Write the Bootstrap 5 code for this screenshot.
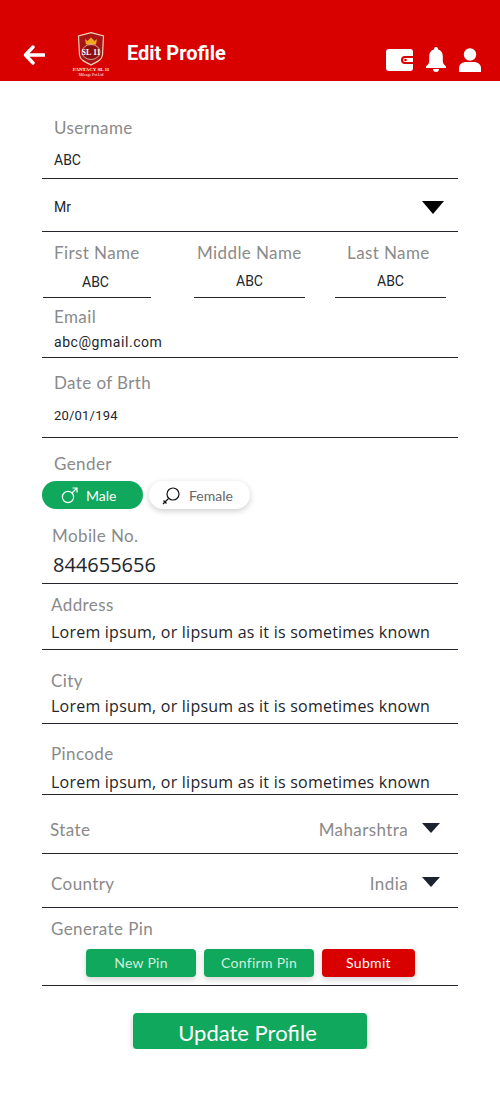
<!DOCTYPE html>
<html lang="en">

<head>
    <meta charset="UTF-8">
    <meta name="viewport" content="width=device-width, initial-scale=1.0">
    <title>Edit Profile</title>
    <link href="https://cdn.jsdelivr.net/npm/bootstrap@5.3.2/dist/css/bootstrap.min.css" rel="stylesheet">
    <style>
        body { font-family: "Lato", "Liberation Sans", sans-serif; background: #fff; color: #22252b; }
        .top-bar { height: 81px; background: #d90000; padding: 32px 19px 0 23px; }
        .top-title { font-family: "Roboto", sans-serif; font-weight: 700; font-size: 20px; line-height: 28px; color: #fff; margin-left: 17px; margin-top: 7px; }
        .arrow-ico { margin-top: 13px; }
        .logo-box { width: 38px; height: 45px; margin-left: 27px; }
        .top-icons { gap: 13px; margin-left: auto; margin-top: 15px; }
        .form-area { padding: 0 42px; }
        .fld { border-bottom: 1px solid #22252b; padding: 0 12px; }
        .lbl { font-size: 17px; line-height: 22px; color: #8a8a8a; letter-spacing: .4px; }
        .val { font-family: "Roboto", sans-serif; font-size: 14px; line-height: 20px; color: #22252b; }
        .val-big { font-family: "Open Sans", sans-serif; font-size: 16px; line-height: 24px; letter-spacing: .23px; color: #22252b; white-space: nowrap; }
        .f-user { height: 98px; padding-top: 36px; }
        .f-user .val { margin-top: 11px; }
        .f-title { height: 53px; padding: 18px 14px 0 12px; }
        .f-title svg { margin-top: 4px; }
        .names { height: 66px; }
        .name-col { border-bottom: 1px solid #22252b; }
        .nm-1 { width: 108px; margin-left: 1px; padding-top: 10px; }
        .nm-2 { width: 111px; margin-left: 43px; padding-top: 10px; }
        .nm-3 { width: 111px; margin-left: 30px; padding-top: 10px; }
        .name-col .lbl { white-space: nowrap; }
        .nm-1 .lbl { padding-left: 11px; }
        .nm-2 .lbl { padding-left: 3px; }
        .nm-3 .lbl { padding-left: 12px; }
        .name-col .val { margin-top: 7px; height: 22px; }
        .nm-1 .val { padding-right: 3px; margin-top: 8px; }
        .f-email { height: 60px; padding-top: 8px; }
        .f-email .val { margin-top: 4px; letter-spacing: .55px; }
        .f-dob { height: 80px; padding-top: 14px; }
        .f-dob .val { margin-top: 12px; font-size: 13px; letter-spacing: .2px; }
        .gender-lbl { padding: 15px 12px 0; }
        .pills { gap: 6px; margin-top: 6px; }
        .pill { height: 28px; border-radius: 14px; font-size: 14px; display: flex; align-items: center; }
        .pill-on { width: 101px; background: #10a85c; color: #fff; padding-left: 19px; }
        .pill-off { width: 101px; background: #fff; color: #666; padding-left: 13px; box-shadow: 0 2px 6px rgba(0,0,0,.2); }
        .pill svg { margin-right: 8px; }
        .f-mobile { height: 75px; padding: 16px 11px 0 10px; }
        .f-mobile .val-big { font-size: 20px; line-height: 28px; margin-top: 4px; margin-left: 1px; letter-spacing: 0; }
        .f-addr { height: 66px; padding: 10px 9px 0; }
        .f-addr .val-big { margin-top: 4px; }
        .f-city { height: 74px; padding: 20px 9px 0; }
        .f-city .val-big { margin-top: 2px; }
        .f-pin { height: 71px; padding: 19px 9px 0; }
        .f-pin .val-big { margin-top: 5px; }
        .f-sel { padding: 0 18px 0 8px; }
        .f-state { height: 59px; padding-top: 24px; }
        .f-country { height: 54px; padding-top: 19px; padding-left: 9px; }
        .sel-val { margin-left: auto; margin-right: 14px; }
        .f-gen { height: 78px; padding: 10px 0 0 9px; }
        .pin-btns { gap: 8px; margin-top: 9px; margin-left: 35px; }
        .pin-btn { height: 28px; width: 110px; border-radius: 4px; border: 0; padding: 0; font-size: 14px; line-height: 28px; letter-spacing: .3px; color: #cfeedd; background: #10a85c; box-shadow: 0 3px 6px rgba(0,0,0,.16); }
        .pin-btn:hover { color: #cfeedd; background: #10a85c; }
        .pin-red, .pin-red:hover { width: 93px; background: #d90000; color: #fff; }
        .update-btn { display: block; width: 234px; height: 36px; margin: 27px 0 0 91px; border: 0; border-radius: 4px; padding: 3px 5px 0 0; background: #10a85c; color: #fff; font-size: 22px; line-height: 33px; box-shadow: 0 3px 6px rgba(0,0,0,.2); }
    </style>
</head>

<body>
    <!-- header -->
    <div class="top-bar d-flex align-items-start">
        <svg class="arrow-ico" width="22" height="20" viewBox="0 0 22 20">
            <path d="M10 2 2.5 10 10 18M3 10H21" fill="none" stroke="#fff" stroke-width="3.4" stroke-linecap="round" stroke-linejoin="round"/>
        </svg>
        <svg class="logo-box" viewBox="0 0 38 45">
            <path d="M19 .6 31.5 4 30.5 23C29.5 29 24 30 19 33 14 30 8.500 29 7.500 23L6.500 4Z" fill="#a81414" stroke="#ecd3b8" stroke-width="1.2"/>
            <path d="M13 7l2.500 2L19 5.500 22.500 9 25 7l-1 5.500H14Z" fill="#f0a81e"/>
            <ellipse cx="19" cy="20" rx="9" ry="7.500" fill="#8a1010" stroke="#fff" stroke-width=".6"/>
            <text x="19" y="23" font-size="8" font-weight="700" text-anchor="middle" fill="#fff" font-family="Liberation Serif">SL 11</text>
            <text x="19" y="38.500" font-size="5" font-weight="700" text-anchor="middle" fill="#fff" font-family="Liberation Serif">FANTACY SL 11</text>
            <text x="19" y="43.500" font-size="3.800" text-anchor="middle" fill="#fff" font-family="Liberation Serif">Mileage Pvt.Ltd</text>
        </svg>
        <div class="top-title">Edit Profile</div>
        <div class="top-icons d-flex align-items-center">
            <svg width="27" height="22" viewBox="0 0 27 22">
                <path d="M3 0H24A3 3 0 0 1 27 3V19A3 3 0 0 1 24 22H3A3 3 0 0 1 0 19V3A3 3 0 0 1 3 0Z" fill="#fff"/>
                <path d="M27 7H19A4 4 0 0 0 19 15H27Z" fill="#d90000"/>
                <path d="M27 9H19A2 2 0 0 0 19 13H27Z" fill="#fff"/>
                <circle cx="19.500" cy="11" r="1.300" fill="#d90000"/>
            </svg>
            <svg width="20" height="25" viewBox="0 0 20 25">
                <path d="M10 0A1.800 1.800 0 0 1 11.800 2.200C15 3 16.800 5.600 16.800 9V14C16.800 16.500 18.200 17.800 20 19.500V21H0V19.500C1.800 17.800 3.200 16.500 3.200 14V9C3.200 5.600 5 3 8.200 2.200A1.800 1.800 0 0 1 10 0Z" fill="#fff"/>
                <path d="M7 22H13A3 3 0 0 1 7 22Z" fill="#fff"/>
            </svg>
            <svg width="22" height="24" viewBox="0 0 22 24">
                <circle cx="11" cy="6.500" r="6.200" fill="#fff"/>
                <path d="M0 24V20C0 16 4 14 7 14H15C18 14 22 16 22 20V24Z" fill="#fff"/>
            </svg>
        </div>
    </div>

    <form class="form-area">
        <div class="fld f-user">
            <div class="lbl">Username</div>
            <div class="val">ABC</div>
        </div>
        <div class="fld f-title d-flex justify-content-between align-items-start">
            <div class="val">Mr</div>
            <svg width="22" height="13" viewBox="0 0 22 13"><path d="M0 0H22L11 13Z" fill="#000"/></svg>
        </div>
        <div class="names d-flex">
            <div class="name-col nm-1">
                <div class="lbl">First Name</div>
                <div class="val text-center">ABC</div>
            </div>
            <div class="name-col nm-2">
                <div class="lbl">Middle Name</div>
                <div class="val text-center">ABC</div>
            </div>
            <div class="name-col nm-3">
                <div class="lbl">Last Name</div>
                <div class="val text-center">ABC</div>
            </div>
        </div>
        <div class="fld f-email">
            <div class="lbl">Email</div>
            <div class="val">abc@gmail.com</div>
        </div>
        <div class="fld f-dob">
            <div class="lbl">Date of Brth</div>
            <div class="val">20/01/194</div>
        </div>
        <div class="lbl gender-lbl">Gender</div>
        <div class="pills d-flex">
            <div class="pill pill-on">
                <svg width="17" height="17" viewBox="0 0 17 17"><circle cx="7" cy="10" r="5.600" fill="none" stroke="#fff" stroke-width="1.200"/><path d="M11 6 16 1M11.500 1H16V5.500" fill="none" stroke="#fff" stroke-width="1.200"/></svg>
                Male
            </div>
            <div class="pill pill-off">
                <svg width="19" height="19" viewBox="0 0 19 19"><circle cx="11" cy="8" r="6" fill="none" stroke="#111" stroke-width="1.200"/><path d="M6.500 12.500 1 18M1.500 14.500 4.500 17.500" fill="none" stroke="#111" stroke-width="1.200"/></svg>
                Female
            </div>
        </div>
        <div class="fld f-mobile">
            <div class="lbl">Mobile No.</div>
            <div class="val-big">844655656</div>
        </div>
        <div class="fld f-addr">
            <div class="lbl">Address</div>
            <div class="val-big">Lorem ipsum, or lipsum as it is sometimes known</div>
        </div>
        <div class="fld f-city">
            <div class="lbl">City</div>
            <div class="val-big">Lorem ipsum, or lipsum as it is sometimes known</div>
        </div>
        <div class="fld f-pin">
            <div class="lbl">Pincode</div>
            <div class="val-big">Lorem ipsum, or lipsum as it is sometimes known</div>
        </div>
        <div class="fld f-sel f-state d-flex align-items-start">
            <div class="lbl">State</div>
            <div class="lbl sel-val">Maharshtra</div>
            <svg width="18" height="10" viewBox="0 0 18 10" class="mt-1"><path d="M0 0H18L9 10Z" fill="#1c2230"/></svg>
        </div>
        <div class="fld f-sel f-country d-flex align-items-start">
            <div class="lbl">Country</div>
            <div class="lbl sel-val">India</div>
            <svg width="18" height="10" viewBox="0 0 18 10" class="mt-1"><path d="M0 0H18L9 10Z" fill="#1c2230"/></svg>
        </div>
        <div class="fld f-gen">
            <div class="lbl">Generate Pin</div>
            <div class="pin-btns d-flex">
                <button type="button" class="btn pin-btn">New Pin</button>
                <button type="button" class="btn pin-btn">Confirm Pin</button>
                <button type="button" class="btn pin-btn pin-red">Submit</button>
            </div>
        </div>
        <button type="button" class="btn update-btn">Update Profile</button>
    </form>

    <script src="https://cdn.jsdelivr.net/npm/bootstrap@5.3.2/dist/js/bootstrap.bundle.min.js"></script>
</body>

</html>
